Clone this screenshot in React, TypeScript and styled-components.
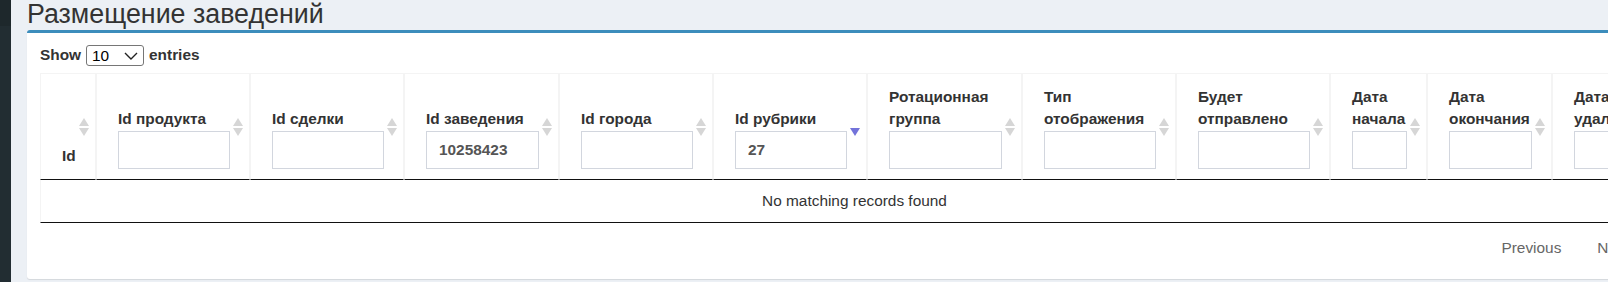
import React from "react";
import styled, { createGlobalStyle } from "styled-components";

const GlobalStyle = createGlobalStyle`
  html, body {
    margin: 0;
    padding: 0;
    overflow: hidden;
  }
  body {
    font-family: "Liberation Sans", Arial, sans-serif;
    font-size: 15.4px;
    line-height: 22px;
    color: #333;
    background: #ecf0f5;
  }
`;

const Page = styled.div`
  display: flex;
  min-height: 282px;
  background: #ecf0f5;
`;

const Sidebar = styled.aside`
  flex: 0 0 11px;
  background: #222d32;
  display: flex;
  flex-direction: column;
`;

const SidebarTop = styled.div`
  height: 26px;
  background: #1e282c;
`;

const Content = styled.main`
  flex: 1;
  min-width: 0;
  padding-left: 16px;
`;

const Title = styled.h1`
  margin: 0;
  font-size: 26.8px;
  line-height: 28px;
  font-weight: 400;
  color: #333;
`;

const Card = styled.section`
  margin-top: 2px;
  width: max-content;
  background: #fff;
  border-top: 3px solid #3c8dbc;
  border-radius: 3px;
  box-shadow: 0 1px 1px rgba(0, 0, 0, 0.1);
  padding: 11px 13px 20px 13px;
`;

const LengthRow = styled.label`
  display: flex;
  align-items: center;
  gap: 5px;
  font-weight: 700;
  height: 22px;
`;

const SelectBox = styled.span`
  position: relative;
  display: inline-block;
  width: 58px;
  height: 21px;
`;

const Select = styled.select`
  appearance: none;
  width: 100%;
  height: 100%;
  box-sizing: border-box;
  border: 1px solid #767676;
  border-radius: 3px;
  background: #fff;
  padding: 0 0 0 5px;
  font: 400 15.4px "Liberation Sans", Arial, sans-serif;
  color: #000;
`;

const Chevron = styled.svg`
  position: absolute;
  right: 6px;
  top: 7px;
  pointer-events: none;
`;

const Table = styled.table`
  margin-top: 7px;
  border-collapse: separate;
  border-spacing: 0;
  table-layout: fixed;
  width: 1629px;
`;

const Th = styled.th<{ $w: number; $pb?: number }>`
  position: relative;
  width: ${(p) => p.$w}px;
  box-sizing: border-box;
  padding: 12px 19px ${(p) => p.$pb ?? 10}px 21px;
  vertical-align: bottom;
  text-align: left;
  font-weight: 700;
  color: #333;
  border-top: 1px solid #f4f4f4;
  border-left: 1px solid #f4f4f4;
  border-right: 1px solid #f4f4f4;
  border-bottom: 1px solid #111;
`;

const Label = styled.div`
  line-height: 22px;
`;

const Filter = styled.input`
  display: block;
  width: 100%;
  height: 38px;
  margin-top: 1px;
  box-sizing: border-box;
  border: 1px solid #d2d6de;
  border-radius: 0;
  padding: 0 12px;
  font: inherit;
  color: #555;
  outline: none;
`;

const SortIcon = styled.svg`
  position: absolute;
  right: 6px;
  top: 50%;
  margin-top: -9px;
`;

const EmptyCell = styled.td`
  padding: 10px;
  text-align: center;
  color: #333;
  border-left: 1px solid #f4f4f4;
  border-right: 1px solid #f4f4f4;
  border-bottom: 1px solid #111;
`;

const Paging = styled.div`
  display: flex;
  justify-content: flex-end;
  gap: 2px;
  margin-top: 14px;
  padding-right: 23px;
`;

const PageButton = styled.span`
  padding: 0 17px;
  color: #666;
`;

type Col = { title: string; w: number; filter?: string | null; sort?: "none" | "desc" };

const columns: Col[] = [
  { title: "Id", w: 56, filter: null },
  { title: "Id продукта", w: 154, filter: "" },
  { title: "Id сделки", w: 154, filter: "" },
  { title: "Id заведения", w: 155, filter: "10258423" },
  { title: "Id города", w: 154, filter: "" },
  { title: "Id рубрики", w: 154, filter: "27", sort: "desc" },
  { title: "Ротационная группа", w: 155, filter: "" },
  { title: "Тип отображения", w: 154, filter: "" },
  { title: "Будет отправлено", w: 154, filter: "" },
  { title: "Дата начала", w: 97, filter: "" },
  { title: "Дата окончания", w: 125, filter: "" },
  { title: "Дата удаления", w: 117, filter: "" },
];

function Sort({ desc }: { desc?: boolean }) {
  return (
    <SortIcon width="10" height="18" viewBox="0 0 10 18">
      {!desc && <polygon points="5,0 10,8 0,8" fill="#d6d6d6" />}
      <polygon points="0,10 10,10 5,18" fill={desc ? "#7373da" : "#d6d6d6"} />
    </SortIcon>
  );
}

export default function App() {
  return (
    <Page>
      <GlobalStyle />
      <Sidebar>
        <SidebarTop />
      </Sidebar>
      <Content>
        <Title>Размещение заведений</Title>
        <Card>
          <LengthRow>
            Show
            <SelectBox>
              <Select defaultValue="10">
                <option value="10">10</option>
                <option value="25">25</option>
                <option value="50">50</option>
                <option value="100">100</option>
              </Select>
              <Chevron width="14" height="8" viewBox="0 0 14 8">
                <polyline points="1,1 7,7 13,1" fill="none" stroke="#222" strokeWidth="1.4" />
              </Chevron>
            </SelectBox>
            entries
          </LengthRow>
          <Table>
            <thead>
              <tr>
                {columns.map((c) => (
                  <Th key={c.title} $w={c.w} $pb={c.filter === null ? 12 : 10}>
                    <Label>{c.title}</Label>
                    {c.filter !== null && <Filter type="text" defaultValue={c.filter} />}
                    <Sort desc={c.sort === "desc"} />
                  </Th>
                ))}
              </tr>
            </thead>
            <tbody>
              <tr>
                <EmptyCell colSpan={columns.length}>No matching records found</EmptyCell>
              </tr>
            </tbody>
          </Table>
          <Paging>
            <PageButton>Previous</PageButton>
            <PageButton>Next</PageButton>
          </Paging>
        </Card>
      </Content>
    </Page>
  );
}
